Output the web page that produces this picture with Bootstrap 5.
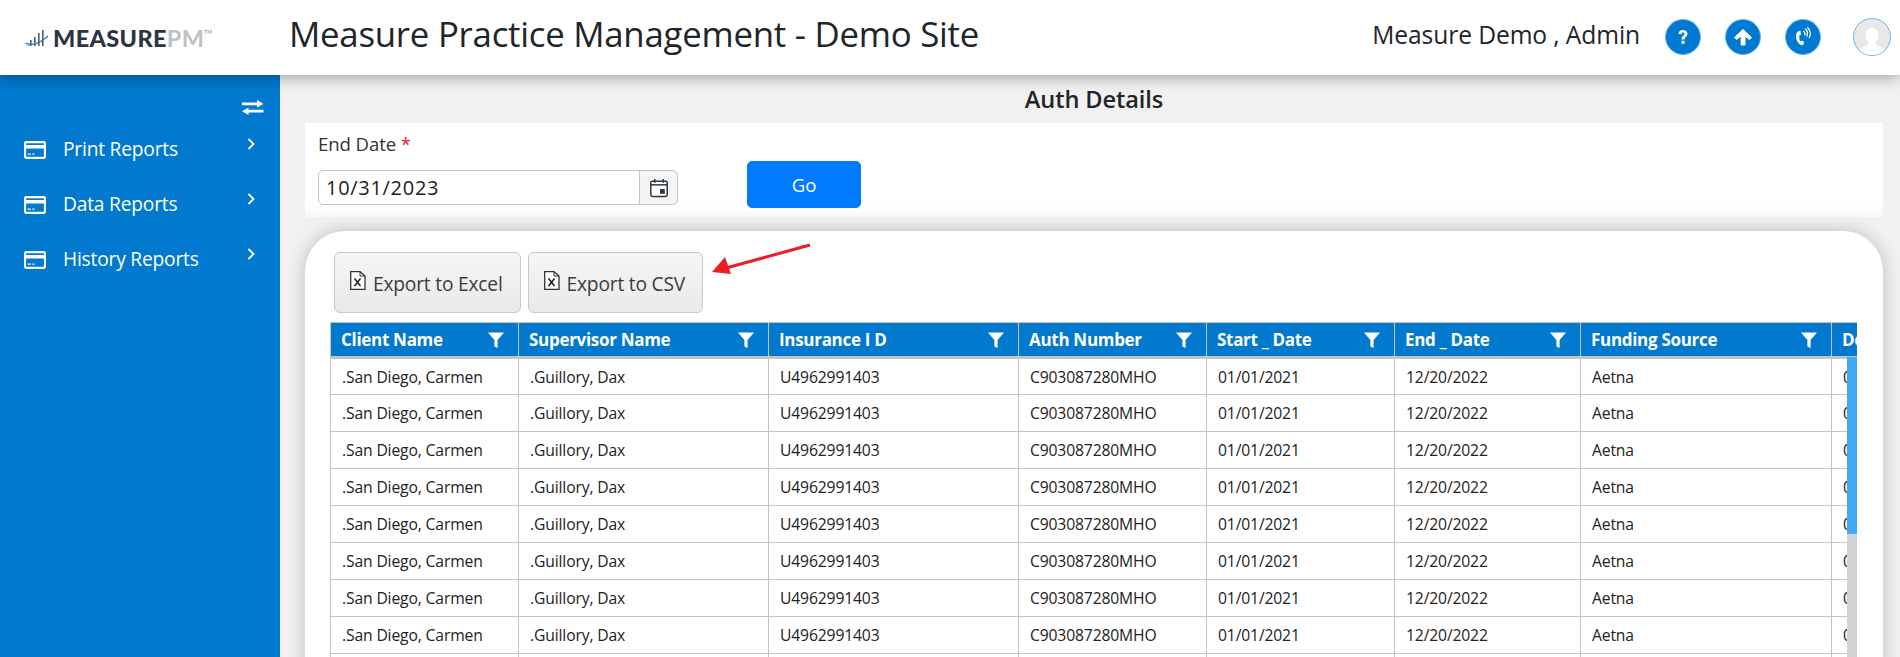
<!DOCTYPE html>
<html lang="en">
<head>
<meta charset="utf-8">
<title>Auth Details</title>
<link href="https://cdn.jsdelivr.net/npm/bootstrap@5.3.0/dist/css/bootstrap.min.css" rel="stylesheet">
<style>
html,body{height:657px;overflow:hidden}
body{font-family:"Open Sans","Noto Sans",sans-serif;background:#f1f1f1;color:#212529}
.topbar{height:75px;background:#fff;box-shadow:0 2px 14px rgba(0,0,0,.35);position:relative;z-index:5;padding:0 9px 0 0}
.logo-box{width:289px;padding:2px 0 0 25px;gap:4px}
.logo-word{font-family:"Lato",sans-serif;font-weight:900;font-size:23.4px;letter-spacing:.4px;color:#2b3540;line-height:1}
.logo-word span{color:#bcc1c6;font-weight:700}
.logo-word sup{font-size:5px;top:-13px;color:#888;font-weight:400;letter-spacing:0}
.site-title{font-size:34.8px;font-weight:500;margin:0;letter-spacing:-.25px;padding-bottom:7px}
.user-name{font-size:24.6px;margin-right:25px;letter-spacing:-.1px;padding-bottom:5px}
.round-ic{width:36px;height:36px;border-radius:50%;background:#0079d0;margin-right:24px;border:1px solid #6cb2ee}
.round-ava{width:38px;height:38px;border-radius:50%;background:#e8e8e8;border:1px solid #6cb2ee;margin-left:8px;overflow:hidden}
.shell{height:582px}
.side{width:280px;background:#0079cf;color:#fff;flex:none;padding-top:25px}
.swap{padding:0 16px 0 0;height:15px;margin-bottom:7px}
.side-link{height:55px;padding:0 25px 0 24px;color:#fff;font-size:19.2px;letter-spacing:-.2px}
.side-link svg.card-ic{margin-right:17px}
.side-link .chev{margin-left:auto;margin-bottom:11px}
.side-link span{padding-bottom:1px}
.work{flex:1;min-width:0;padding:10px 17px 0 25px}
.page-head{font-size:23.6px;font-weight:600;height:38px;text-align:center;line-height:28px;margin:0;letter-spacing:-.1px}
.filter-panel{height:94px;background:linear-gradient(#fff 85%,#f8f8f8);padding:10px 13px 0;gap:69px}
.field-lbl{font-size:18.6px;margin-bottom:15px;line-height:22px;letter-spacing:-.1px;color:#333}
.field-lbl b{color:#e22;font-weight:400}
.date-group{width:360px;height:35px}
.date-group .form-control{height:35px;font-size:20px;padding:0 7px;border-color:#c4c4c4;color:#222;letter-spacing:.7px;border-radius:5px 0 0 5px}
.date-group .input-group-text{height:35px;width:39px;padding:0;justify-content:center;background:#f4f4f4;border-color:#c4c4c4;border-radius:0 5px 5px 0}
.go-btn{width:114px;height:47px;font-size:18.6px;background:#007bff;border-color:#007bff;margin-top:28px;border-radius:5px}
.grid-card{height:440px;margin-top:14px;background:#fff;border:0;border-radius:40px 40px 0 0;box-shadow:0 0 18px rgba(0,0,0,.22);padding:21px 25px 0;position:relative}
.tool-row{gap:7px;margin:0 0 9px 4px}
.exp-btn{height:61px;padding:3px 17px 0 15px;font-size:19.2px;color:#3c3c3c;background:linear-gradient(#f6f6f6,#e9e9e9);border:1px solid #c8c8c8;border-radius:6px;letter-spacing:-.2px;gap:7px}
.exp-btn svg{margin-bottom:10px}
.grid-wrap{width:1527px;height:340px;overflow:hidden;position:relative}
.auth-grid{table-layout:fixed;width:1715px;margin:0;font-size:15.7px;border-color:#c4c4c4;letter-spacing:-.15px}
.auth-grid th,.auth-grid td{border:1px solid #c4c4c4;padding:2px 11px 0;white-space:nowrap;overflow:hidden;vertical-align:middle}
.auth-grid th{padding:0 14px 0 10px}
.auth-grid thead th{background:#0079cf;color:#fff;height:35px;font-size:17px;font-weight:700;border-bottom:3px solid #c4c4c4;letter-spacing:-.3px}
.auth-grid td{height:37px;color:#222}
.head-in{gap:6px}
.c1{width:188px}.c2{width:250px}.c3{width:250px}.c4{width:188px}.c5{width:188px}.c6{width:186px}.c7{width:251px}.c8{width:214px}
.bar-track{position:absolute;right:0;top:35px;bottom:0;width:10px;background:#d3d3d3}
.bar-thumb{height:177px;background:#42a9f5}
.red-arrow{position:absolute;left:407px;top:12px}
</style>
</head>
<body>
<header class="topbar d-flex align-items-center">
  <div class="logo-box d-flex align-items-center flex-none">
    <svg width="24" height="20" viewBox="0 0 24 20"><g fill="#555c64"><rect x="5" y="11" width="1.6" height="6"/><rect x="9" y="8" width="1.6" height="9"/><rect x="13" y="4" width="1.6" height="13"/><rect x="17" y="1" width="1.6" height="16"/></g><path d="M1 14C6 17 14 15 23 7" stroke="#2a7fc9" stroke-width="1.3" fill="none"/><path d="M1 14 Q0 16 5 17" stroke="#555c64" stroke-width="1" fill="none" stroke-dasharray="1 1"/></svg>
    <div class="logo-word">MEASURE<span>PM</span><sup>TM</sup></div>
  </div>
  <h1 class="site-title">Measure Practice Management - Demo Site</h1>
  <div class="ms-auto d-flex align-items-center">
    <div class="user-name">Measure Demo , Admin</div>
    <div class="round-ic d-flex align-items-center justify-content-center"><svg width="14" height="18" viewBox="0 0 14 18"><path d="M2.500 6C2.500 3.400 4.500 2 7 2s4.500 1.500 4.500 3.800C11.500 8.800 8.500 9 8.500 11.500H5.500C5.500 8 8.500 7.500 8.500 5.800 8.500 5 7.800 4.600 7 4.600 6 4.600 5.500 5.200 5.500 6.300Z" fill="#fff"/><rect x="5.500" y="12.800" width="3" height="3" fill="#fff"/></svg></div>
    <div class="round-ic d-flex align-items-center justify-content-center"><svg width="20" height="20" viewBox="0 0 20 20"><path d="M10 2.500 18.500 10.500 16.500 12.500 12 9V18H8.200V9L3.500 12.500 1.500 10.500Z" fill="#fff" stroke="#fff" stroke-linejoin="round"/></svg></div>
    <div class="round-ic d-flex align-items-center justify-content-center"><svg width="24" height="24" viewBox="0 0 22 22"><path d="M7 5.500C4.500 7 4.200 10 5 13s3 5.500 6 5.500l1.200-3-2.600-1.300-.8 1C7.700 14 7.300 11.500 7.700 9.300l1.400-.3L8.700 5.200Z" fill="#fff"/><g stroke="#fff" stroke-width="1.200" fill="none"><path d="M11 5.500a3 3 0 0 1 1.500 4"/><path d="M13 3.500a6 6 0 0 1 1.500 7"/><path d="M15 2a8.500 8.500 0 0 1 1.600 10"/></g></svg></div>
    <div class="round-ava d-flex align-items-end justify-content-center"><svg width="30" height="30" viewBox="0 0 30 30"><path d="M15 3c4 0 6.500 3 6.500 7 0 3-1.300 5.500-3 7v2.500L28 24v6H2v-6l9.500-4.500V17c-1.700-1.500-3-4-3-7 0-4 2.500-7 6.500-7Z" fill="#fff"/></svg></div>
  </div>
</header>
<div class="shell d-flex">
  <aside class="side">
    <div class="swap d-flex justify-content-end"><svg width="22" height="15" viewBox="0 0 22 15"><path d="M0 2.600H15V0L21.500 4 15 7.500V5.200H0Z" fill="#fff"/><path d="M21.500 9.800H6.500V7.500L0 11.300 6.500 15V12.400H21.500Z" fill="#fff"/></svg></div>
    <nav class="nav flex-column">
      <a class="nav-link side-link d-flex align-items-center" href="#"><svg class="card-ic" width="22" height="18" viewBox="0 0 21 17"><path d="M2 0h17a2 2 0 0 1 2 2v13a2 2 0 0 1-2 2H2a2 2 0 0 1-2-2V2a2 2 0 0 1 2-2Zm0 2v1.800h17V2Zm0 5v8h17V7Zm1.500 4.800h3v1.200h-3Zm4.500 0h2v1.200H8Z" fill="#fff" fill-rule="evenodd"/></svg><span>Print Reports</span><svg class="chev" width="8" height="12" viewBox="0 0 8 12"><path d="M1.500 1 6.500 6 1.500 11" stroke="#fff" stroke-width="1.800" fill="none"/></svg></a>
      <a class="nav-link side-link d-flex align-items-center" href="#"><svg class="card-ic" width="22" height="18" viewBox="0 0 21 17"><path d="M2 0h17a2 2 0 0 1 2 2v13a2 2 0 0 1-2 2H2a2 2 0 0 1-2-2V2a2 2 0 0 1 2-2Zm0 2v1.800h17V2Zm0 5v8h17V7Zm1.500 4.800h3v1.200h-3Zm4.500 0h2v1.200H8Z" fill="#fff" fill-rule="evenodd"/></svg><span>Data Reports</span><svg class="chev" width="8" height="12" viewBox="0 0 8 12"><path d="M1.500 1 6.500 6 1.500 11" stroke="#fff" stroke-width="1.800" fill="none"/></svg></a>
      <a class="nav-link side-link d-flex align-items-center" href="#"><svg class="card-ic" width="22" height="18" viewBox="0 0 21 17"><path d="M2 0h17a2 2 0 0 1 2 2v13a2 2 0 0 1-2 2H2a2 2 0 0 1-2-2V2a2 2 0 0 1 2-2Zm0 2v1.800h17V2Zm0 5v8h17V7Zm1.500 4.800h3v1.200h-3Zm4.500 0h2v1.200H8Z" fill="#fff" fill-rule="evenodd"/></svg><span>History Reports</span><svg class="chev" width="8" height="12" viewBox="0 0 8 12"><path d="M1.500 1 6.500 6 1.500 11" stroke="#fff" stroke-width="1.800" fill="none"/></svg></a>
    </nav>
  </aside>
  <main class="work">
    <h2 class="page-head">Auth Details</h2>
    <div class="filter-panel d-flex">
      <div>
        <div class="field-lbl">End Date <b>*</b></div>
        <div class="input-group date-group">
          <input class="form-control" type="text" value="10/31/2023">
          <span class="input-group-text"><svg width="20" height="20" viewBox="0 0 19 19"><rect x="1.700" y="3" width="15.600" height="14.500" rx="1.500" fill="#fff" stroke="#2c3540" stroke-width="1.400"/><path d="M1.700 6.500h15.600" stroke="#2c3540" stroke-width="1.400"/><path d="M5.500 1v3.500M13.500 1v3.500" stroke="#2c3540" stroke-width="1.400"/><rect x="10.500" y="10.500" width="4.500" height="4.500" fill="#2c3540"/></svg></span>
        </div>
      </div>
      <button class="btn btn-primary go-btn" type="button">Go</button>
    </div>
    <section class="card grid-card">
      <div class="tool-row d-flex">
        <button class="exp-btn d-flex align-items-center" type="button"><svg width="16" height="21" viewBox="0 0 16 21"><path d="M.7 2.700H10L15 7v13.300H.7Z" fill="#fff" stroke="#333" stroke-width="1.300"/><path d="M10 2.700V7h5" fill="none" stroke="#333"/><path d="M4.500 9.500 10.500 17M10.500 9.500 4.500 17" stroke="#222" stroke-width="1.600"/></svg>Export to Excel</button>
        <button class="exp-btn d-flex align-items-center" type="button"><svg width="16" height="21" viewBox="0 0 16 21"><path d="M.7 2.700H10L15 7v13.300H.7Z" fill="#fff" stroke="#333" stroke-width="1.300"/><path d="M10 2.700V7h5" fill="none" stroke="#333"/><path d="M4.500 9.500 10.500 17M10.500 9.500 4.500 17" stroke="#222" stroke-width="1.600"/></svg>Export to CSV</button>
      </div>
      <svg class="red-arrow" width="100" height="32" viewBox="0 0 100 32"><path d="M98 2 14 25" stroke="#ee1c25" stroke-width="3"/><path d="M0 29 13 14 19 31Z" fill="#ee1c25"/></svg>
      <div class="grid-wrap">
        <table class="table auth-grid">
          <colgroup><col class="c1"><col class="c2"><col class="c3"><col class="c4"><col class="c5"><col class="c6"><col class="c7"><col class="c8"></colgroup>
          <thead>
            <tr id="hd"></tr>
          </thead>
          <tbody id="bd"></tbody>
        </table>
        <div class="bar-track"><div class="bar-thumb"></div></div>
      </div>
    </section>
  </main>
</div>
<script>
var heads=["Client Name","Supervisor Name","Insurance I D","Auth Number","Start _ Date","End _ Date","Funding Source","Denied"];
var funnel='<svg width="16" height="16" viewBox="0 0 15 15"><path d="M0 .5h15L9 7.500V15L6 13.500V7.500Z" fill="#fff"/></svg>';
document.getElementById("hd").innerHTML=heads.map(function(h){return '<th><div class="head-in d-flex justify-content-between align-items-center"><span>'+h+'</span>'+funnel+'</div></th>';}).join("");
var row=[".San Diego, Carmen",".Guillory, Dax","U4962991403","C903087280MHO","01/01/2021","12/20/2022","Aetna","01/01/2021"];
var html="";
for(var i=0;i<10;i++){html+="<tr>"+row.map(function(c){return "<td>"+c+"</td>";}).join("")+"</tr>";}
document.getElementById("bd").innerHTML=html;
</script>
<script src="https://cdn.jsdelivr.net/npm/bootstrap@5.3.0/dist/js/bootstrap.bundle.min.js"></script>
</body>
</html>
